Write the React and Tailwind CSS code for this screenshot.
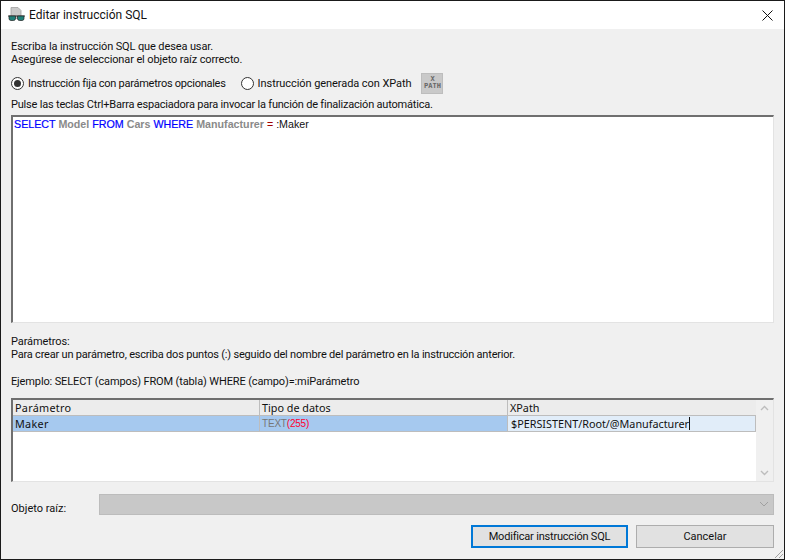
import React from "react";

const ui = { fontFamily: 'Roboto, "Liberation Sans", sans-serif' };
const mono = { fontFamily: '"Liberation Sans", Arial, sans-serif' };
const table = { fontFamily: '"Noto Sans", "Liberation Sans", sans-serif' };

function Radio({ on, children }) {
  return (
    <div className="flex items-center gap-[4px]">
      <span className="w-[13px] h-[13px] rounded-full border border-[#333] bg-white flex items-center justify-center shrink-0">
        {on && <span className="w-[7px] h-[7px] rounded-full bg-[#333]" />}
      </span>
      {children}
    </div>
  );
}

export default function App() {
  return (
    <div className="w-[785px] h-[560px] flex flex-col bg-[#f0f0f0] border border-[#1a1a1a] text-[11px] leading-[13px] text-[#111] overflow-hidden relative" style={ui}>
      <div className="h-[28px] shrink-0 bg-white flex items-center pl-[7px] pr-[11px]">
        <svg width="17" height="17" viewBox="0 0 17 17" className="shrink-0">
          <path d="M3 0.5h7l3 3v8H3z" fill="#c9c9c9" stroke="#a0a0a0" strokeWidth="0.8" />
          <path d="M0 9h17" stroke="#333" strokeWidth="1" />
          <path d="M1 9h6.5v2.5a2 2 0 0 1-2 2H3a2 2 0 0 1-2-2z" fill="#1f7f78" stroke="#222" strokeWidth="0.7" />
          <path d="M9.5 9H16v2.5a2 2 0 0 1-2 2h-2.5a2 2 0 0 1-2-2z" fill="#1f7f78" stroke="#222" strokeWidth="0.7" />
        </svg>
        <span className="ml-[4px] text-[12px]">Editar instrucción SQL</span>
        <svg width="11" height="11" viewBox="0 0 11 11" className="ml-auto">
          <path d="M0.5 0.5l10 10M10.5 0.5l-10 10" stroke="#111" strokeWidth="1" />
        </svg>
      </div>

      <div className="flex-1 flex flex-col px-[10px] pt-[11px]">
        <div className="tracking-[-0.12px]">Escriba la instrucción SQL que desea usar.</div>
        <div className="tracking-[-0.12px]">Asegúrese de seleccionar el objeto raíz correcto.</div>

        <div className="flex items-center mt-[6px] h-[22px]">
          <Radio on><span className="tracking-[-0.26px]">Instrucción fija con parámetros opcionales</span></Radio>
          <div className="ml-[15px]"><Radio><span className="tracking-[-0.07px]">Instrucción generada con XPath</span></Radio></div>
          <div className="ml-[10px] w-[22px] h-[21px] bg-[#c9c9c9] border border-[#bdbdbd] flex flex-col items-center justify-center text-[#666] text-[7px] leading-[7px] font-bold" style={{ fontFamily: '"DejaVu Sans Mono", monospace' }}>
            <span>X</span>
            <span>PATH</span>
          </div>
        </div>

        <div className="mt-[4px] tracking-[-0.2px]">Pulse las teclas Ctrl+Barra espaciadora para invocar la función de finalización automática.</div>

        <div className="mt-[4px] h-[208px] bg-white border-t-2 border-l-2 border-t-[#6f6f6f] border-l-[#6f6f6f] border-r border-b border-r-[#e3e3e3] border-b-[#e3e3e3] pl-[1px] pt-[1px] text-[10.7px] leading-[13px]" style={mono}>
          <span className="text-[#0000ff] [-webkit-text-stroke:0.2px]">SELECT</span>{" "}
          <span className="text-[#8a8a8a] font-bold">Model</span>{" "}
          <span className="text-[#0000ff] [-webkit-text-stroke:0.2px]">FROM</span>{" "}
          <span className="text-[#8a8a8a] font-bold">Cars</span>{" "}
          <span className="text-[#0000ff] [-webkit-text-stroke:0.2px]">WHERE</span>{" "}
          <span className="text-[#8a8a8a] font-bold">Manufacturer</span>{" "}
          <span className="text-[#a00000]">=</span>{" "}
          <span className="text-[#111]">:Maker</span>
        </div>

        <div className="mt-[12px] tracking-[-0.1px]">Parámetros:</div>
        <div className="tracking-[-0.2px]">Para crear un parámetro, escriba dos puntos (:) seguido del nombre del parámetro en la instrucción anterior.</div>
        <div className="mt-[14px] tracking-[-0.13px]">Ejemplo: SELECT (campos) FROM (tabla) WHERE (campo)=:miParámetro</div>

        <div className="mt-[10px] h-[84px] flex bg-white border-t-2 border-l-2 border-t-[#6f6f6f] border-l-[#6f6f6f] border-r border-b border-r-[#e3e3e3] border-b-[#e3e3e3]">
          <div className="flex-1 flex flex-col min-w-0 text-[10.8px]" style={table}>
            <div className="h-[16px] grid grid-cols-[247px_248px_1fr] bg-[#ececec] border-b border-b-[#bdbdbd] leading-[15px]">
              <div className="pl-[2px] border-r border-r-[#bdbdbd] tracking-[0.3px]">Parámetro</div>
              <div className="pl-[2px] border-r border-r-[#bdbdbd]">Tipo de datos</div>
              <div className="pl-[2px]">XPath</div>
            </div>
            <div className="h-[16px] grid grid-cols-[247px_248px_1fr] border-b border-b-[#bdbdbd] leading-[15px]">
              <div className="pl-[2px] bg-[#a6c9ef] border-r border-r-[#bdbdbd] tracking-[0.3px]">Maker</div>
              <div className="pl-[2px] bg-[#a6c9ef] border-r border-r-[#bdbdbd] text-[10px] tracking-[-0.2px]" style={mono}>
                <span className="text-[#777]">TEXT</span><span className="text-[#ff0030]">(255)</span>
              </div>
              <div className="pl-[3px] bg-[#e1edf9] border-r border-r-[#bdbdbd] flex items-center">
                <span>$PERSISTENT/Root/@Manufacturer</span>
                <span className="w-[1px] h-[13px] bg-[#111]" />
              </div>
            </div>
          </div>
          <div className="w-[17px] shrink-0 bg-[#f0f0f0] flex flex-col items-center justify-between py-[5px]">
            <svg width="9" height="6" viewBox="0 0 9 6"><path d="M1 5l3.5-3.5L8 5" fill="none" stroke="#bdbdbd" strokeWidth="1.4" /></svg>
            <svg width="9" height="6" viewBox="0 0 9 6"><path d="M1 1l3.5 3.5L8 1" fill="none" stroke="#bdbdbd" strokeWidth="1.4" /></svg>
          </div>
        </div>

        <div className="mt-[11px] flex items-center h-[22px]">
          <span className="w-[88px] pt-[8px]">Objeto raíz:</span>
          <div className="flex-1 h-[21px] bg-[#c8c8c8] border border-[#bcbcbc] flex items-center justify-end pr-[4px]">
            <svg width="10" height="6" viewBox="0 0 10 6"><path d="M1 1l4 4 4-4" fill="none" stroke="#a0a0a0" strokeWidth="1" /></svg>
          </div>
        </div>

        <div className="mt-[10px] flex justify-end gap-[8px]">
          <div className="w-[157px] h-[23px] bg-[#e1e1e1] border-2 border-[#0078d7] flex items-center justify-center tracking-[-0.2px]">Modificar instrucción SQL</div>
          <div className="w-[138px] h-[23px] bg-[#e1e1e1] border border-[#adadad] flex items-center justify-center">Cancelar</div>
        </div>
      </div>

      <svg width="12" height="12" viewBox="0 0 12 12" className="absolute right-0 bottom-0">
        <path d="M11 3l-8 8M11 7l-4 4" stroke="#a0a0a0" strokeWidth="1" />
      </svg>
    </div>
  );
}
